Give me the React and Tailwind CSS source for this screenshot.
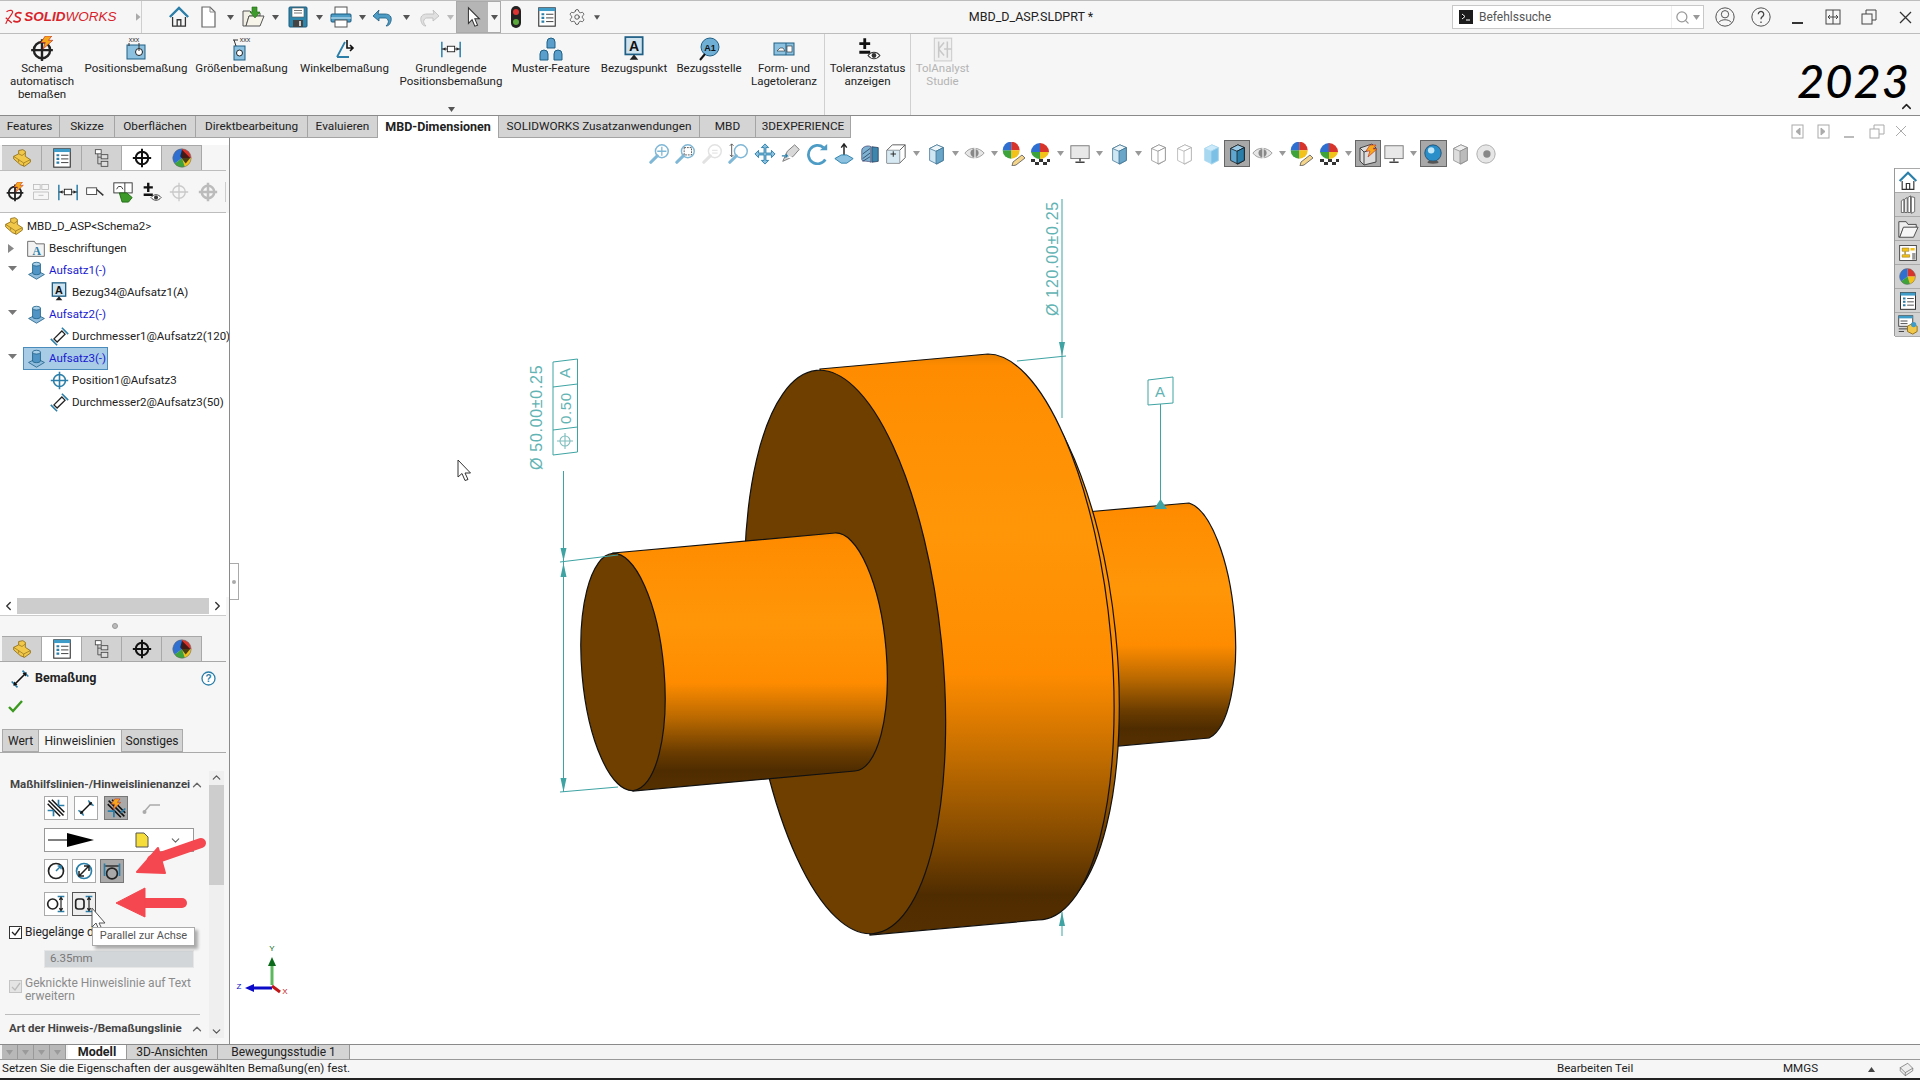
import { Settings, ChevronUp, ChevronDown, ChevronLeft, ChevronRight, Search } from 'lucide-react'

const TEAL = '#2a7ea8'
const ANNO = '#3fa3a3'

function I({ s = 20, children, className = '' }) {
  return <svg width={s} height={s} viewBox="0 0 24 24" fill="none" className={className}>{children}</svg>
}

function Caret({ up = false, color = '#555' }) {
  return (
    <svg width="7" height="5" viewBox="0 0 7 5">
      <path d={up ? 'M0 5L3.5 0L7 5z' : 'M0 0L7 0L3.5 5z'} fill={color} />
    </svg>
  )
}

// ---- general icons
const Home = ({ s = 24 }) => (
  <I s={s}>
    <path d="M2 12L12 2l10 10" stroke={TEAL} strokeWidth="2.6" />
    <path d="M5 12v10h14V12M10 22v-7h4v7" stroke="#333" strokeWidth="1.4" />
  </I>
)
const Doc = () => (
  <I s={24}>
    <path d="M6 2h8l5 5v15H6z" fill="#fff" stroke="#666" strokeWidth="1.2" />
    <path d="M14 2v5h5" stroke="#888" />
  </I>
)
const OpenIco = () => (
  <I s={24}>
    <path d="M2 6h7l2 2h8v3H8L5 21H2z" fill="#f2efe4" stroke="#555" />
    <path d="M8 11h15l-4 10H5z" fill="#f7f4ea" stroke="#555" />
    <path d="M11 2h5v5h3l-5 6-5-6h2z" fill="#3f9a2c" stroke="#1f6a12" strokeWidth=".6" />
  </I>
)
const Save = () => (
  <I s={24}>
    <rect x="3" y="2" width="18" height="20" rx="1" fill="#2f86ad" stroke="#1c5a7c" />
    <rect x="6" y="3" width="12" height="9" fill="#fff" stroke="#555" strokeWidth=".6" />
    <path d="M8 5.5h8M8 8h8" stroke="#777" />
    <rect x="7" y="15" width="10" height="7" fill="#444" />
    <rect x="13" y="16" width="2" height="5" fill="#ccc" />
  </I>
)
const PrintIco = () => (
  <I s={24}>
    <rect x="6" y="2" width="12" height="8" fill="#fff" stroke="#555" />
    <rect x="2" y="9" width="20" height="8" rx="1" fill="#4d9cc6" stroke="#1c5a7c" />
    <rect x="6" y="15" width="12" height="7" fill="#fff" stroke="#555" />
    <path d="M2 13h20" stroke="#d5ecf8" />
  </I>
)
const Undo = ({ off }) => (
  <I s={24}>
    <path
      d="M6 9h7c5 0 7 3 6 7s-3 5-5 5c2-2 3-4 2-6s-2-2-4-2H7v3L1 11l6-6z"
      fill={off ? '#e0e0e0' : '#4d9cc6'}
      stroke={off ? '#bbb' : '#1c5a7c'}
      strokeWidth=".8"
      transform={off ? 'translate(24 0) scale(-1 1)' : undefined}
    />
  </I>
)
const Arrow = ({ s = 22 }) => (
  <I s={s}>
    <path d="M7 2v17l4-4 3 7 3-1-3-7h5z" fill="#fff" stroke="#333" strokeWidth="1.1" />
  </I>
)
const Traffic = () => (
  <svg width="12" height="22" viewBox="0 0 12 22">
    <rect x="1" y="0" width="10" height="22" rx="5" fill="#222" />
    <circle cx="6" cy="6" r="3" fill="#d33" />
    <circle cx="6" cy="16" r="3" fill="#5aa83a" />
  </svg>
)
const ListIco = ({ s = 22 }) => (
  <I s={s}>
    <rect x="3" y="2" width="18" height="20" fill="#fff" stroke="#333" strokeWidth="1.2" />
    <rect x="3" y="2" width="18" height="3.5" fill="#3f9bc7" />
    <path d="M6 9h3M6 13h3M6 17h3" stroke={TEAL} strokeWidth="2.4" />
    <path d="M11 9h8M11 13h8M11 17h8" stroke="#333" />
  </I>
)
const Ball = ({ s = 22, shade = false }) => (
  <I s={s}>
    <path d="M12 12V2a10 10 0 0 1 10 10z" fill="#d9342b" />
    <path d="M12 12h10a10 10 0 0 1-7 9.5z" fill="#f2c21a" />
    <path d="M12 12l3 9.5A10 10 0 0 1 4 18z" fill="#3ea33a" />
    <path d="M12 12L4 18A10 10 0 0 1 12 2z" fill="#2f6fd0" />
    {shade && <path d="M12 3l9 9-5 6-6-8z" fill="#111" opacity=".75" />}
    <circle cx="12" cy="12" r="10" stroke="#666" strokeWidth=".6" />
  </I>
)
const PencilBall = () => (
  <I s={24}>
    <g transform="translate(-1 -2) scale(.85)"><path d="M12 12V2a10 10 0 0 1 10 10z" fill="#d9342b" /><path d="M12 12h10a10 10 0 0 1-10 10z" fill="#f2c21a" /><path d="M12 12v10A10 10 0 0 1 2 12z" fill="#3ea33a" /><path d="M12 12H2A10 10 0 0 1 12 2z" fill="#2f6fd0" /></g>
    <path d="M20 13l3 3-9 7-4 1 1-4z" fill="#f4d58a" stroke="#555" strokeWidth=".8" />
  </I>
)
const CheckerBall = () => (
  <I s={24}>
    <path d="M12 10V1a9 9 0 0 1 9 9z" fill="#d9342b" />
    <path d="M12 10h9a9 9 0 0 1-9 7z" fill="#f2c21a" />
    <path d="M12 10v7a9 9 0 0 1-9-7z" fill="#3ea33a" />
    <path d="M12 10H3a9 9 0 0 1 9-9z" fill="#2f6fd0" />
    <path d="M3 17h4v3H3zM11 17h4v3h-4zM7 20h4v3H7zM15 20h4v3h-4zM19 17h3v3h-3z" fill="#333" />
  </I>
)
const Crosshair = ({ s = 20, c = '#111', w = 2.4 }) => (
  <I s={s}>
    <circle cx="12" cy="12" r="7.5" stroke={c} strokeWidth={w} />
    <path d="M12 1v22M1 12h22" stroke={c} strokeWidth={w} />
  </I>
)
const PartBlock = ({ s = 20 }) => (
  <I s={s}>
    <path d="M2 10l6-3V3l5-1 3 2v6l6 4v3l-7 5-5-2-8-7z" fill="#f2c84b" stroke="#8a6a14" strokeWidth="1" />
    <path d="M8 7l4 2 4-3M2 10l6 4v3M8 14l6 4 8-4M14 18v4" stroke="#8a6a14" strokeWidth=".8" />
  </I>
)
const TreeCfg = ({ s = 20 }) => (
  <I s={s}>
    <rect x="4" y="2" width="7" height="5" fill="#fff" stroke="#444" />
    <rect x="11" y="8" width="8" height="5" fill="#ddd" stroke="#444" />
    <rect x="11" y="16" width="8" height="6" fill="#ddd" stroke="#444" />
    <path d="M7 7v12h4M7 11h4" stroke="#444" />
  </I>
)
const Boss = ({ s = 19 }) => (
  <I s={s}>
    <path d="M2 17l10-5 10 5-10 6z" fill="#8fbcdc" stroke="#1f5f85" />
    <path d="M7 4v11c0 3 10 3 10 0V4z" fill="#4f94c4" stroke="#1f5f85" />
    <ellipse cx="12" cy="4" rx="5" ry="2.4" fill="#a9d0ea" stroke="#1f5f85" />
  </I>
)
const Dia = ({ s = 19 }) => (
  <I s={s}>
    <path d="M5 15L15 5l4 4L9 19z" fill="#fff" stroke="#222" strokeWidth="1.6" />
    <path d="M1 15l8 8M15 1l8 8" stroke={TEAL} strokeWidth="2" />
  </I>
)
const DatumA = ({ s = 20 }) => (
  <svg width={s} height={s} viewBox="0 0 24 24">
    <rect x="4" y="1" width="16" height="16" fill="#cfe3ef" stroke="#1f5f85" strokeWidth="1.6" />
    <text x="12" y="14" textAnchor="middle" fontSize="13" fontWeight="700" fontFamily="Liberation Sans" fill="#111">A</text>
    <path d="M8 22l4-5 4 5z" fill="#222" />
  </svg>
)
const FolderA = () => (
  <svg width="20" height="20" viewBox="0 0 24 24">
    <path d="M2 4h8l2 3h10v15H2z" fill="#f2f2f2" stroke="#555" />
    <text x="13" y="20" textAnchor="middle" fontSize="14" fontWeight="700" fontFamily="Liberation Serif" fill={TEAL}>A</text>
  </svg>
)
const Bolt = ({ x = 12, y = 1 }) => (
  <path transform={`translate(${x} ${y})`} d="M4 0h6L7 4h4L2 12l2-6H0z" fill="#f7a81b" stroke="#c0392b" strokeWidth=".7" />
)
const DimArrows = ({ s = 20 }) => (
  <I s={s}>
    <path d="M2 15l7 7M15 2l7 7" stroke={TEAL} strokeWidth="2" />
    <path d="M6 18L18 6" stroke="#111" strokeWidth="2" />
    <path d="M4 20l1-5 4 4zM20 4l-1 5-4-4z" fill="#111" />
  </I>
)

// ---- ribbon icons
const SchemaIco = () => (
  <I s={26}>
    <circle cx="12" cy="13" r="7.5" stroke="#222" strokeWidth="2.2" />
    <path d="M12 3v20M2 13h20" stroke="#222" strokeWidth="2.2" />
    <Bolt x={11} y={0} />
  </I>
)
const PosDim = () => (
  <svg width="20" height="26" viewBox="0 0 20 26">
    <text x="8" y="6" textAnchor="middle" fontSize="7" fontFamily="Liberation Sans" fill="#333">xxx</text>
    <rect x="1" y="9" width="18" height="14" fill="#8cc2e0" stroke="#1f5f85" />
    <circle cx="13" cy="16" r="3.5" fill="#fff" stroke="#222" />
    <path d="M3 7v3M13 7v8" stroke="#333" />
  </svg>
)
const SizeDim = () => (
  <svg width="22" height="26" viewBox="0 0 22 26">
    <text x="14" y="6" textAnchor="middle" fontSize="7" fontFamily="Liberation Sans" fill="#333">xxx</text>
    <rect x="3" y="10" width="11" height="14" fill="#8cc2e0" stroke="#1f5f85" />
    <circle cx="8.5" cy="17" r="3" fill="#fff" stroke="#222" />
    <path d="M2 4h5M3 4l2 6" stroke="#333" />
  </svg>
)
const AngleDim = () => (
  <I s={24}>
    <path d="M4 20L12 5M4 20h12" stroke={TEAL} strokeWidth="1.8" />
    <path d="M14 3v8h5M17 8l3 3-3 3" stroke="#111" strokeWidth="1.6" />
  </I>
)
const BasicPos = () => (
  <svg width="22" height="22" viewBox="0 0 24 24">
    <path d="M2 4v17M22 4v17" stroke={TEAL} strokeWidth="1.6" />
    <rect x="8" y="9" width="8" height="6" fill="#fff" stroke="#222" />
    <path d="M2 12h6M16 12h6" stroke="#222" />
    <path d="M3 12l3-2v4zM21 12l-3-2v4z" fill="#222" />
  </svg>
)
const Muster = () => (
  <svg width="24" height="26" viewBox="0 0 24 26">
    {[[12, 1], [5, 13], [19, 13]].map(([x, y]) => (
      <g key={x}>
        <path d={`M${x - 4} ${y + 11}v-6a4 4 0 0 1 8 0v6z`} fill="#5a9fcb" stroke="#1f5f85" />
      </g>
    ))}
  </svg>
)
const BezugP = () => <DatumA s={26} />
const BezugS = () => (
  <svg width="24" height="24" viewBox="0 0 24 24">
    <circle cx="13" cy="10" r="9" fill="#6fafd6" stroke="#1f5f85" />
    <text x="13" y="14" textAnchor="middle" fontSize="9" fontWeight="700" fontFamily="Liberation Sans" fill="#111">A1</text>
    <path d="M8 17l-5 6" stroke="#111" strokeWidth="2" />
  </svg>
)
const FormTol = () => (
  <svg width="22" height="14" viewBox="0 0 22 14">
    <rect x="1" y="1" width="20" height="12" fill="#8cc2e0" stroke="#1f5f85" />
    <path d="M4 9l3-3h3l2 3z" fill="#fff" stroke="#222" strokeWidth=".6" />
    <path d="M13 1v12" stroke="#1f5f85" />
    <rect x="14" y="4" width="5" height="6" fill="#fff" stroke="#222" strokeWidth=".6" />
  </svg>
)
const TolStatus = ({ s = 26 }) => (
  <I s={s}>
    <path d="M9 2v10M4 7h10M4 15h10" stroke="#111" strokeWidth="2.6" />
    <path d="M12 18c3-4 8-4 11 0-3 4-8 4-11 0z" fill="#fff" stroke="#333" />
    <circle cx="17.5" cy="18" r="2.2" fill="#333" />
  </I>
)
const TolAnalyst = () => (
  <I s={26}>
    <rect x="4" y="2" width="16" height="21" fill="#f0f0f0" stroke="#ccc" />
    <path d="M8 5v15M8 12l5-6M8 12l5 6M16 5v15M13 12h7" stroke="#c8c8c8" strokeWidth="1.4" />
  </I>
)

// ---- heads-up toolbar icons
const Mag = ({ children, c = '#7fb7d6' }) => (
  <I s={22}>
    <circle cx="14" cy="9" r="7" fill="#fff" stroke={c} strokeWidth="1.6" />
    <path d="M9 14l-7 7" stroke={c} strokeWidth="3.4" strokeLinecap="round" />
    {children}
  </I>
)
const Pan = () => (
  <I s={22}>
    <path d="M12 1l4 4h-3v6h6V8l4 4-4 4v-3h-6v6h3l-4 4-4-4h3v-6H5v3l-4-4 4-4v3h6V5H8z" fill="#8cc2e0" stroke="#2a7ea8" />
  </I>
)
const Camera3d = () => (
  <I s={22}>
    <path d="M3 20l5-11 8-7 5 5-7 8z" fill="#d8d8d8" stroke="#777" />
    <path d="M5 13l9 4" stroke="#fff" strokeWidth="2" />
    <path d="M2 14h6l-2-2M8 14l-2 2" stroke={TEAL} strokeWidth="1.4" />
  </I>
)
const Rotate = () => (
  <I s={22}>
    <path d="M20 18a10 10 0 1 1-2-13" stroke="#4d9cc6" strokeWidth="3" />
    <path d="M14 8h8V1z" fill="#4d9cc6" />
  </I>
)
const UpPlane = () => (
  <I s={22}>
    <path d="M12 2v15M9 5l3-4 3 4" stroke="#222" strokeWidth="1.6" />
    <path d="M2 17l7-4h6l7 4-7 5H9z" fill="#8cc2e0" stroke={TEAL} />
  </I>
)
const Section = () => (
  <I s={22}>
    <path d="M3 8c0-4 7-6 10-4v17c-3-2-10 0-10-3z" fill="#7fb2d0" stroke="#336" strokeWidth=".7" />
    <path d="M14 4l7 1v15l-7 1z" fill="#3f86ad" stroke="#124" strokeWidth=".7" />
    <path d="M4 12l8-6M4 17l8-6M4 20l8-5" stroke="#124" strokeWidth=".7" />
  </I>
)
const BoxView = () => (
  <I s={22}>
    <path d="M2 8l6-6h14v14l-6 6H2z" fill="#fff" stroke="#555" />
    <path d="M2 8h14v14M16 8l6-6" stroke="#555" />
    <path d="M16 8v14H2V8z" fill="#cde3f0" opacity=".8" />
    <path d="M6 12h6M9 9v6" stroke="#222" />
  </I>
)
const Cube = ({ fill = '#7fb7d6', s = 22, hi = '#cfe6f3', dk = '#3f86ad', line = '#3a6f8e' }) => (
  <I s={s}>
    <path d="M5 6l8-4 7 3v14l-7 4-8-4z" fill={fill} stroke={line} strokeWidth=".8" />
    <path d="M5 6l7 3 8-4-7-3z" fill={hi} stroke={line} strokeWidth=".8" />
    <path d="M12 9v14l8-4V5z" fill={dk} stroke={line} strokeWidth=".8" />
  </I>
)
const Eye = () => (
  <I s={22}>
    <path d="M1 11c5-7 15-7 21 0-6 7-16 7-21 0z" fill="#e6e6e6" stroke="#999" />
    <circle cx="11.5" cy="11" r="4.5" fill="#888" />
    <path d="M12 3v18" stroke="#fff" strokeWidth="1.2" />
  </I>
)
const Monitor = () => (
  <I s={22}>
    <rect x="2" y="3" width="20" height="14" fill="#e8e8e8" stroke="#777" />
    <path d="M12 17v3M7 21h10" stroke="#444" strokeWidth="1.6" />
  </I>
)
const Sphere = () => (
  <I s={22}>
    <circle cx="12" cy="11" r="9" fill="#2a8fc8" stroke="#135" strokeWidth=".7" />
    <circle cx="10" cy="8" r="3.5" fill="#bfe6f8" />
    <ellipse cx="12" cy="21" rx="6" ry="1.6" fill="#555" />
  </I>
)
const Lens = () => (
  <I s={22}>
    <circle cx="12" cy="12" r="10" fill="#e6e6e6" stroke="#aaa" />
    <circle cx="13" cy="12" r="4" fill="#888" />
  </I>
)
const BoltCube = () => (
  <I s={24}>
    <path d="M4 6l12-4 4 4v14L8 23l-4-4z" fill="#dcdcdc" stroke="#444" />
    <path d="M4 6l4 4v13M8 10l12-4" stroke="#444" />
    <Bolt x={10} y={3} />
  </I>
)
const ZoomArrows = () => <Mag><path d="M14 4v10M9 9h10" stroke="#7fb7d6" strokeWidth="1.4" /></Mag>

const HUD = [
  { el: <ZoomArrows /> },
  { el: <Mag><rect x="10" y="5" width="8" height="8" stroke="#555" strokeDasharray="2 1" /></Mag> },
  { el: <Mag c="#e2e2e2"><path d="M11 8h6M11 11h6" stroke="#ddd" /></Mag> },
  { el: <Mag><path d="M4 1v14M2 3l2-2 2 2M2 13l2 2 2-2" stroke="#555" /></Mag> },
  { el: <Pan /> },
  { el: <Camera3d /> },
  { el: <Rotate /> },
  { el: <UpPlane /> },
  { el: <Section /> },
  { el: <BoxView />, caret: true },
  { el: <Cube fill="#cfe6f3" hi="#eef6fa" dk="#6aa6c8" />, caret: true },
  { el: <Eye />, caret: true },
  { el: <PencilBall /> },
  { el: <CheckerBall />, caret: true },
  { el: <Monitor />, caret: true },
  { el: <Cube fill="#cfe6f3" hi="#eef6fa" dk="#6aa6c8" />, caret: true },
  { el: <Cube fill="#fff" hi="#fff" dk="#fff" line="#888" /> },
  { el: <Cube fill="#fff" hi="#fff" dk="#fff" line="#aaa" /> },
  { el: <Cube fill="#a8d8f0" hi="#cdeafa" dk="#7cc0e6" line="#a8d8f0" /> },
  { el: <Cube fill="#5fa6d0" hi="#9accea" dk="#2a7ea8" line="#111" />, on: true },
  { el: <Eye />, caret: true },
  { el: <PencilBall /> },
  { el: <CheckerBall />, caret: true },
  { el: <BoltCube />, on: true },
  { el: <Monitor />, caret: true },
  { el: <Sphere />, on: true },
  { el: <Cube fill="#ddd" hi="#eee" dk="#bbb" line="#888" /> },
  { el: <Lens /> },
]

const TABS = [
  { label: 'Features', w: 'w-[60px]' },
  { label: 'Skizze', w: 'w-[55px]' },
  { label: 'Oberflächen', w: 'w-[81px]' },
  { label: 'Direktbearbeitung', w: 'w-[112px]' },
  { label: 'Evaluieren', w: 'w-[70px]' },
  { label: 'MBD-Dimensionen', w: 'w-[121px]', active: true },
  { label: 'SOLIDWORKS Zusatzanwendungen', w: 'w-[201px]' },
  { label: 'MBD', w: 'w-[56px]' },
  { label: '3DEXPERIENCE', w: 'w-[95px]' },
]

const RIBBON = [
  { w: 'w-[84px]', icon: <SchemaIco />, lines: ['Schema', 'automatisch', 'bemaßen'] },
  { w: 'w-[104px]', icon: <PosDim />, lines: ['Positionsbemaßung'] },
  { w: 'w-[107px]', icon: <SizeDim />, lines: ['Größenbemaßung'] },
  { w: 'w-[99px]', icon: <AngleDim />, lines: ['Winkelbemaßung'] },
  { w: 'w-[114px]', icon: <BasicPos />, lines: ['Grundlegende', 'Positionsbemaßung'], caret: true },
  { w: 'w-[86px]', icon: <Muster />, lines: ['Muster-Feature'] },
  { w: 'w-[80px]', icon: <BezugP />, lines: ['Bezugspunkt'] },
  { w: 'w-[70px]', icon: <BezugS />, lines: ['Bezugsstelle'] },
  { w: 'w-[80px]', icon: <FormTol />, lines: ['Form- und', 'Lagetoleranz'] },
]

const TREE = [
  { depth: 0, icon: <PartBlock />, text: 'MBD_D_ASP<Schema2>' },
  { depth: 1, arrow: 'right', icon: <FolderA />, text: 'Beschriftungen' },
  { depth: 1, arrow: 'down', icon: <Boss />, text: 'Aufsatz1(-)', blue: true },
  { depth: 2, icon: <DatumA />, text: 'Bezug34@Aufsatz1(A)' },
  { depth: 1, arrow: 'down', icon: <Boss />, text: 'Aufsatz2(-)', blue: true },
  { depth: 2, icon: <Dia />, text: 'Durchmesser1@Aufsatz2(120)' },
  { depth: 1, arrow: 'down', icon: <Boss />, text: 'Aufsatz3(-)', blue: true, sel: true },
  { depth: 2, icon: <Crosshair s={19} c={TEAL} w={2} />, text: 'Position1@Aufsatz3' },
  { depth: 2, icon: <Dia />, text: 'Durchmesser2@Aufsatz3(50)' },
]

function ModeTabs({ active }) {
  const icons = [<PartBlock key="p" />, <ListIco key="l" />, <TreeCfg key="t" />, <Crosshair key="c" />, <Ball key="b" shade />]
  return (
    <div className="flex h-full pl-[2px]">
      {icons.map((ic, i) => (
        <div
          key={i}
          className={`w-10 flex items-center justify-center border-r border-t border-[#a8a8a8] ${i === active ? 'bg-white' : 'bg-[#d2d2d2]'}`}
        >
          {ic}
        </div>
      ))}
    </div>
  )
}

function Btn({ children, on = false }) {
  return (
    <div className={`w-6 h-6 flex items-center justify-center border ${on ? 'bg-[#a9a9a9] border-[#777]' : 'bg-white border-[#aaa]'}`}>
      {children}
    </div>
  )
}

function TreeRow({ row }) {
  const pad = row.depth === 0 ? 'pl-[2px]' : row.depth === 1 ? 'pl-[24px]' : 'pl-[47px]'
  return (
    <div className={`relative h-[22px] flex items-center ${pad} whitespace-nowrap`}>
      {row.arrow && (
        <div className="absolute left-[8px] top-[7px]">
          {row.arrow === 'right'
            ? <svg width="6" height="9" viewBox="0 0 6 9"><path d="M0 0l6 4.5L0 9z" fill="#888" /></svg>
            : <svg width="9" height="6" viewBox="0 0 9 6"><path d="M0 0h9L4.5 5z" fill="#777" /></svg>}
        </div>
      )}
      <div className={`h-[21px] flex items-center gap-[3px] pl-[2px] pr-[1px] ${row.sel ? 'bg-[#a8cbe6] outline outline-[#4a8dbd]' : ''}`}>
        <span className="w-5 flex justify-center shrink-0">{row.icon}</span>
        <span className={`text-[11.5px] leading-[20px] ${row.blue ? 'text-[#1a1ad0]' : 'text-[#222]'}`}>
          {row.text}
        </span>
      </div>
    </div>
  )
}

function PartDrawing() {
  return (
    <svg className="absolute inset-0" width="1691" height="906" viewBox="229 138 1691 906" fill="none">
      <defs>
        <linearGradient id="rimG" x1="0" y1="0" x2="0" y2="1">
          <stop offset="0" stopColor="#e88000" />
          <stop offset=".02" stopColor="#ff8c00" />
          <stop offset=".3" stopColor="#ff9608" />
          <stop offset=".55" stopColor="#ff8c00" />
          <stop offset=".68" stopColor="#c87000" />
          <stop offset=".82" stopColor="#8a4e00" />
          <stop offset=".93" stopColor="#4f2c00" />
          <stop offset="1" stopColor="#552f00" />
        </linearGradient>
        <linearGradient id="cylG" x1="0" y1="0" x2="0" y2="1">
          <stop offset="0" stopColor="#ee8400" />
          <stop offset=".03" stopColor="#ff8c00" />
          <stop offset=".35" stopColor="#ff9608" />
          <stop offset=".58" stopColor="#ff8c00" />
          <stop offset=".72" stopColor="#b86800" />
          <stop offset=".85" stopColor="#6a3c00" />
          <stop offset=".92" stopColor="#4f2c00" />
          <stop offset="1" stopColor="#553000" />
        </linearGradient>
      </defs>

      {/* right shaft */}
      <path d="M1085 512L1188 503A41 119 -5 0 1 1208 738L1095 748Z" fill="url(#cylG)" stroke="#111" strokeWidth="1.2" />
      {/* flange, thin back rim + main rim + front face */}
      <ellipse cx="1017" cy="642" rx="98" ry="272" transform="rotate(-5.8 1017 642)" fill="url(#rimG)" stroke="#111" strokeWidth="1.2" />
      <path d="M819 369L987 354A97 283 -5.8 0 1 1037 920L869 935Z" fill="url(#rimG)" stroke="#111" strokeWidth="1.2" />
      <ellipse cx="844" cy="652" rx="97" ry="283" transform="rotate(-5.8 844 652)" fill="#6f3f00" stroke="#111" strokeWidth="1.2" />
      {/* left shaft */}
      <path d="M612 553L834 533A41 119 -5 0 1 854 771L632 791Z" fill="url(#cylG)" stroke="#111" strokeWidth="1.2" />
      <ellipse cx="622" cy="672" rx="41" ry="119" transform="rotate(-5 622 672)" fill="#6f3f00" stroke="#111" strokeWidth="1.2" />

      {/* dimension 120 */}
      <g stroke={ANNO} strokeWidth="1">
        <path d="M1061 199V418M1016 361L1065 356" />
        <path d="M1061 912V936" />
      </g>
      <path d="M1058 342h6l-3 14z" fill={ANNO} />
      <path d="M1058 926h6l-3-14z" fill={ANNO} />
      <text transform="rotate(-90 1057 316)" x="1057" y="316" fontSize="16" letterSpacing=".7" fontFamily="Liberation Sans" fill="#62b3b3">Ø 120.00±0.25</text>

      {/* dimension 50 + tolerance frame */}
      <g stroke={ANNO} strokeWidth="1">
        <path d="M562.5 471V792M559 562L617 555M559 792L617 787" />
        <path d="M552 362L576.5 359V452L552 455ZM552 387L576.5 384M552 430L576.5 427" />
      </g>
      <path d="M559.5 548h6l-3 13z" fill={ANNO} />
      <path d="M559.5 577h6l-3-14z" fill={ANNO} />
      <path d="M559.5 778h6l-3 14z" fill={ANNO} />
      <text transform="rotate(-90 541 470)" x="541" y="470" fontSize="16" letterSpacing=".7" fontFamily="Liberation Sans" fill="#62b3b3">Ø 50.00±0.25</text>
      <text transform="rotate(-90 569 378)" x="569" y="378" fontSize="15" fontFamily="Liberation Sans" fill="#62b3b3">A</text>
      <text transform="rotate(-90 570 424)" x="570" y="424" fontSize="15" letterSpacing=".6" fontFamily="Liberation Sans" fill="#62b3b3">0.50</text>
      <g stroke="#7fbcbc" strokeWidth="1.1"><circle cx="564" cy="441" r="5" /><path d="M564 433V449M556 441H572" /></g>

      {/* datum A */}
      <path d="M1147 380L1172 377V403L1147 405Z" stroke={ANNO} fill="#fff" />
      <text x="1159" y="397" textAnchor="middle" fontSize="15" fontFamily="Liberation Sans" fill="#62b3b3">A</text>
      <path d="M1159.5 404V502" stroke={ANNO} />
      <path d="M1153 509h13l-6.500-10z" fill={ANNO} />

      {/* triad */}
      <path d="M271 985V965" stroke="#5cb85c" strokeWidth="3" />
      <path d="M271 957l-4 9h8z" fill="#0a6a1a" />
      <path d="M271 988H252" stroke="#0a0ac8" strokeWidth="3" />
      <path d="M244 988l9-4v8z" fill="#0a0ac8" />
      <path d="M271 986l8 6" stroke="#c01818" strokeWidth="3" />
      <text x="271" y="951" textAnchor="middle" fontSize="8" fontFamily="Liberation Sans" fill="#0a6a1a">Y</text>
      <text x="238" y="989" textAnchor="middle" fontSize="8" fontFamily="Liberation Sans" fill="#0a0ac8">Z</text>
      <text x="284" y="994" textAnchor="middle" fontSize="8" fontFamily="Liberation Sans" fill="#c01818">X</text>

      {/* mouse pointer */}
      <path d="M457 460v17l4-3.500 3 7 3-1-3-6.500h5.500z" fill="#fff" stroke="#333" />
    </svg>
  )
}

function Overlays() {
  return (
    <>
      <svg className="absolute left-0 top-0 pointer-events-none" width="240" height="1080" viewBox="0 0 240 1080" fill="none">
        <path d="M201 843L152 860" stroke="#f4474f" strokeWidth="10" strokeLinecap="round" />
        <path d="M137 872L158 848L165 873Z" fill="#f4474f" stroke="#f4474f" strokeWidth="2" strokeLinejoin="round" />
        <path d="M182 903H140" stroke="#f4474f" strokeWidth="10" strokeLinecap="round" />
        <path d="M116 903L145 888V917Z" fill="#f4474f" stroke="#f4474f" strokeWidth="1" strokeLinejoin="round" />
        <path d="M92 908v19l4-4 3 7 3-1-3-6h6z" fill="#fff" stroke="#555" />
      </svg>
      <div className="absolute left-[92px] top-[927px] w-[103px] h-[19px] bg-white border border-[#aaa] shadow-[3px_3px_3px_rgba(0,0,0,0.3)] flex items-center justify-center text-[11px] text-[#555]">
        Parallel zur Achse
      </div>
    </>
  )
}

export default function App() {
  return (
    <div className="relative w-[1920px] h-[1080px] overflow-hidden flex flex-col bg-white text-[#222] [font-family:Roboto,sans-serif]">
      {/* title bar */}
      <div className="h-[34px] shrink-0 flex items-center bg-[#f6f6f6] border-t border-b border-[#bdbdbd]">
        <div className="w-[610px] shrink-0 flex items-center h-full">
          <div className="w-[142px] h-full flex items-center border-r border-[#cfcfcf] pl-[5px] gap-[3px]">
            <svg width="24" height="22" viewBox="0 0 24 22" fill="none">
              <path d="M2 4c4-3 9-2 8 1-1 4-7 8-9 15M1 12l8 7" stroke="#d8232a" strokeWidth="1.6" />
              <path d="M22 6c-5-2-9 0-8 3 1 3 7 2 6 6-1 3-6 3-9 1" stroke="#d8232a" strokeWidth="2.2" />
            </svg>
            <span className="text-[13.5px] italic text-[#d8232a] [font-family:'Liberation_Sans',sans-serif] -ml-[2px]">
              <b>SOLID</b>WORKS
            </span>
            <svg className="ml-[17px]" width="6" height="10" viewBox="0 0 6 10"><path d="M0 0l6 5-6 5z" fill="#aaa" /></svg>
          </div>
          <div className="flex items-center ml-[25px]">
            <span className="w-[24px] flex justify-center"><Home s={22} /></span>
            <span className="w-[34px] flex justify-center"><Doc /></span>
            <span className="w-[10px] flex justify-center"><Caret /></span>
            <span className="w-[30px] flex justify-center ml-[3px]"><OpenIco /></span>
            <span className="w-[14px] flex justify-center"><Caret /></span>
            <span className="w-[28px] flex justify-center ml-[2px]"><Save /></span>
            <span className="w-[14px] flex justify-center"><Caret /></span>
            <span className="w-[30px] flex justify-center"><PrintIco /></span>
            <span className="w-[12px] flex justify-center"><Caret /></span>
            <span className="w-[32px] flex justify-center"><Undo /></span>
            <span className="w-[12px] flex justify-center"><Caret /></span>
            <span className="w-[32px] flex justify-center"><Undo off /></span>
            <span className="w-[12px] flex justify-center"><Caret color="#bbb" /></span>
            <div className="flex h-[32px] border border-[#aaa]">
              <span className="w-[31px] bg-[#b5b5b5] flex items-center justify-center"><Arrow /></span>
              <span className="w-[12px] flex items-center justify-center"><Caret /></span>
            </div>
            <span className="w-[28px] flex justify-center ml-[1px]"><Traffic /></span>
            <span className="w-[26px] flex justify-center ml-[4px]"><ListIco /></span>
            <span className="w-[34px] flex justify-center"><Settings size={18} strokeWidth={1} color="#333" /></span>
            <span className="w-[6px] flex justify-center"><Caret /></span>
          </div>
        </div>
        <div className="flex-1 text-center text-[12.5px]">MBD_D_ASP.SLDPRT *</div>
        <div className="w-[252px] shrink-0 h-[24px] bg-white border border-[#c8c8c8] flex items-center">
          <svg className="ml-[6px]" width="14" height="14" viewBox="0 0 14 14"><rect width="14" height="14" fill="#1c1c1c" /><path d="M3 4l3 2.500-3 2.500M7 10h4" stroke="#fff" /></svg>
          <span className="ml-[6px] flex-1 text-[12px] text-[#555]">Befehlssuche</span>
          <span className="w-[32px] h-full border-l border-[#eee] flex items-center gap-[3px] pl-[3px]">
            <Search size={15} color="#999" />
            <Caret color="#999" />
          </span>
        </div>
        <div className="flex shrink-0 ml-[3px] -mr-[3px] items-center">
          <span className="w-9 flex justify-center">
            <I s={22}><circle cx="12" cy="12" r="10" stroke="#444" /><circle cx="12" cy="9" r="4" stroke="#444" /><path d="M5 18c3-4 11-4 14 0" stroke="#444" /></I>
          </span>
          <span className="w-9 flex justify-center">
            <svg width="22" height="22" viewBox="0 0 24 24" fill="none"><circle cx="12" cy="12" r="10" stroke="#444" /><path d="M9 9a3 3 0 1 1 4.500 2.600c-1 .6-1.500 1.300-1.500 2.900M12 17v1.500" stroke="#444" strokeWidth="1.400" /></svg>
          </span>
          <span className="w-9 flex justify-center pt-[12px]"><span className="w-[11px] h-[2px] bg-[#333]" /></span>
          <span className="w-9 flex justify-center">
            <svg width="16" height="16" viewBox="0 0 16 16" fill="none"><rect x="1" y="1" width="14" height="14" stroke="#444" /><path d="M8 1v14M3 8h10M3 8l2-2M3 8l2 2M13 8l-2-2M13 8l-2 2" stroke="#444" /></svg>
          </span>
          <span className="w-9 flex justify-center">
            <svg width="16" height="16" viewBox="0 0 16 16" fill="none"><rect x="1" y="5" width="10" height="10" stroke="#444" /><path d="M5 5V1h10v10h-4" stroke="#444" /></svg>
          </span>
          <span className="w-9 flex justify-center">
            <svg width="13" height="13" viewBox="0 0 13 13"><path d="M1 1l11 11M12 1L1 12" stroke="#333" strokeWidth="1.300" /></svg>
          </span>
        </div>
      </div>

      {/* ribbon */}
      <div className="relative h-[82px] shrink-0 flex bg-[#f6f6f6] border-b border-[#8a8a8a]">
        {RIBBON.map(r => (
          <div key={r.lines[0]} className={`${r.w} shrink-0 flex flex-col items-center text-[11.5px] leading-[13px] text-center`}>
            <div className="h-[26px] mt-[2px] flex items-center justify-center">{r.icon}</div>
            {r.lines.map(l => <div key={l} className="whitespace-nowrap">{l}</div>)}
            {r.caret && <div className="mt-[19px] flex"><Caret /></div>}
          </div>
        ))}
        <div className="w-[86px] shrink-0 border-l border-[#d0d0d0] flex flex-col items-center text-[11.5px] leading-[13px] text-center">
          <div className="h-[26px] mt-[2px] flex items-center justify-center"><TolStatus /></div>
          <div>Toleranzstatus</div>
          <div>anzeigen</div>
        </div>
        <div className="w-[64px] shrink-0 border-l border-[#d0d0d0] flex flex-col items-center text-[11.5px] leading-[13px] text-center text-[#b4b4b4]">
          <div className="h-[26px] mt-[2px] flex items-center justify-center"><TolAnalyst /></div>
          <div>TolAnalyst</div>
          <div>Studie</div>
        </div>
        <div className="absolute right-[10px] top-[21px] text-[47px] leading-[50px] italic font-medium text-black tracking-[1px] [font-family:Lato,sans-serif]">2023</div>
        <ChevronUp className="absolute right-[6px] bottom-[1px]" size={15} strokeWidth={2.4} color="#222" />
      </div>

      {/* command manager tabs */}
      <div className="h-[22px] shrink-0 flex bg-white">
        {TABS.map(t => (
          <div
            key={t.label}
            className={`${t.w} h-full flex items-center justify-center whitespace-nowrap border-r border-[#a4a4a4] ${t.active ? 'bg-white font-bold text-[12.5px]' : 'bg-[#d4d4d4] border-b text-[11.8px]'}`}
          >
            {t.label}
          </div>
        ))}
      </div>

      {/* main */}
      <div className="flex-1 min-h-0 flex">
        <div className="w-[230px] shrink-0 flex flex-col border-r border-[#8a8a8a] bg-[#f6f6f6]">
          <div className="h-[7px] shrink-0 bg-white" />
          <div className="h-[25px] shrink-0"><ModeTabs active={3} /></div>
          <div className="h-[43px] shrink-0 flex items-center gap-[5px] pl-[5px] border-t border-b border-[#bdbdbd] mr-[3px] overflow-hidden">
            <SchemaIco2 />
            <span className="w-[22px] shrink-0 flex justify-center opacity-40"><Sq /></span>
            <span className="w-[22px] shrink-0 flex justify-center"><BasicPos /></span>
            <span className="w-[22px] shrink-0 flex justify-center"><LeaderBox /></span>
            <span className="w-[24px] shrink-0 flex justify-center"><FormGreen /></span>
            <span className="w-[22px] shrink-0 flex justify-center"><TolStatus s={22} /></span>
            <span className="w-[24px] shrink-0 flex justify-center opacity-30"><Crosshair c="#666" w={1.6} /></span>
            <span className="w-[24px] shrink-0 flex justify-center opacity-40"><Crosshair c="#666" w={3} /></span>
            <span className="w-[6px] shrink-0 h-[20px] bg-[#e4e4e4] border border-[#ccc]" />
          </div>
          <div className="h-[384px] shrink-0 bg-white overflow-hidden pt-[2px]">
            {TREE.map(row => <TreeRow key={row.text} row={row} />)}
          </div>
          <div className="h-[19px] shrink-0 flex items-center bg-white border-b border-[#ccc] mr-[3px]">
            <ChevronLeft size={14} strokeWidth={2.4} color="#333" className="w-[17px]" />
            <div className="flex-1 h-[16px] bg-[#cdcdcd]" />
            <ChevronRight size={14} strokeWidth={2.4} color="#333" className="w-[17px]" />
          </div>
          <div className="h-[20px] shrink-0 flex items-center justify-center">
            <span className="w-[6px] h-[6px] rounded-full bg-[#bbb] border border-[#999]" />
          </div>
          <div className="h-[26px] shrink-0 border-b border-[#a8a8a8] mr-[3px]"><ModeTabs active={1} /></div>

          <div className="h-[33px] shrink-0 flex items-center pl-[10px] pr-[13px]">
            <DimArrows />
            <span className="ml-[5px] flex-1 font-bold text-[12.5px] text-[#222]">Bemaßung</span>
            <svg width="15" height="15" viewBox="0 0 15 15" fill="none">
              <circle cx="7.5" cy="7.500" r="6.500" fill="#fff" stroke={TEAL} strokeWidth="1.300" />
              <text x="7.5" y="11" textAnchor="middle" fontSize="10" fontWeight="700" fontFamily="Liberation Sans" fill={TEAL}>?</text>
            </svg>
          </div>
          <div className="h-[22px] shrink-0 pl-[8px] flex items-center">
            <svg width="15" height="13" viewBox="0 0 15 13" fill="none"><path d="M1 7l4 4 9-10" stroke="#3b9a1e" strokeWidth="2.400" /></svg>
          </div>
          <div className="h-[24px] mt-[12px] shrink-0 flex pl-[2px] border-b border-[#aaa] mr-[3px] text-[12px]">
            <div className="w-[37px] flex items-center justify-center bg-[#d4d4d4] border border-[#aaa]">Wert</div>
            <div className="w-[82px] flex items-center justify-center bg-[#f6f6f6] border-t border-[#aaa]">Hinweislinien</div>
            <div className="w-[62px] flex items-center justify-center bg-[#d4d4d4] border border-[#aaa]">Sonstiges</div>
          </div>

          <div className="flex-1 min-h-0 flex">
            <div className="flex-1 min-w-0 flex flex-col">
              <div className="h-[24px] mt-[20px] shrink-0 flex items-center pl-[10px] pr-[1px]">
                <span className="flex-1 overflow-hidden whitespace-nowrap font-bold text-[11.5px] text-[#444]">Maßhilfslinien-/Hinweislinienanzei</span>
                <ChevronUp size={14} color="#666" strokeWidth={2.2} />
              </div>
              <div className="flex gap-[6px] pl-[44px] items-center -mt-[1px]">
                <Btn><Collapse /></Btn>
                <Btn><DimArrows s={18} /></Btn>
                <Btn on><CollapseBolt /></Btn>
                <svg className="ml-[8px]" width="20" height="14" viewBox="0 0 20 14" fill="none"><path d="M2 11l6-7h10" stroke="#aaa" strokeWidth="1.500" /><circle cx="2.500" cy="11" r="2" fill="#aaa" /></svg>
              </div>
              <div className="ml-[44px] mr-[11px] mt-[8px] h-[24px] shrink-0 bg-white border border-[#999] flex items-center">
                <svg className="ml-[2px]" width="48" height="14" viewBox="0 0 48 14"><path d="M1 7h22" stroke="#000" /><path d="M20 0l27 7-27 7z" fill="#000" /></svg>
                <svg className="ml-[40px]" width="14" height="16" viewBox="0 0 14 16"><path d="M1 1h8l4 4v10H1z" fill="#f7dd3a" stroke="#555" /></svg>
                <ChevronDown className="ml-[20px]" size={13} color="#666" />
              </div>
              <div className="flex pl-[44px] mt-[7px] gap-[4px]">
                <Btn><Circ kind="r" /></Btn>
                <Btn><Circ kind="d" /></Btn>
                <Btn on><Circ kind="s" /></Btn>
              </div>
              <div className="flex pl-[44px] mt-[9px] gap-[4px]">
                <Btn><Par /></Btn>
                <div className="w-6 h-6 flex items-center justify-center border border-[#555] bg-[#eee]"><Par2 /></div>
              </div>
              <div className="flex items-center mt-[9px] pl-[9px] text-[12px] whitespace-nowrap h-[14px]">
                <span className="w-[13px] h-[13px] shrink-0 border border-[#333] bg-white flex items-center justify-center">
                  <svg width="10" height="10" viewBox="0 0 10 10" fill="none"><path d="M1 5l3 3 5-7" stroke="#222" strokeWidth="1.300" /></svg>
                </span>
                <span className="ml-[3px]">Biegelänge d</span>
              </div>
              <div className="ml-[44px] mr-[11px] mt-[11px] h-[18px] shrink-0 bg-[#d3d6d9] border border-[#e6e6e6] text-[11.5px] text-[#777] flex items-center pl-[5px]">6.35mm</div>
              <div className="flex pl-[9px] mt-[9px] text-[12px] leading-[13px] text-[#8b8b8b]">
                <span className="w-[13px] h-[13px] mt-[3px] shrink-0 border border-[#c4c4c4] bg-[#e4e4e4] flex items-center justify-center">
                  <svg width="10" height="10" viewBox="0 0 10 10" fill="none"><path d="M1 5l3 3 5-7" stroke="#bbb" strokeWidth="1.300" /></svg>
                </span>
                <span className="ml-[3px]">Geknickte Hinweislinie auf Text erweitern</span>
              </div>
              <div className="mx-[5px] mt-[11px] h-px shrink-0 bg-[#bdbdbd]" />
              <div className="h-[28px] shrink-0 flex items-center pl-[9px] pr-[1px]">
                <span className="flex-1 whitespace-nowrap overflow-hidden font-bold text-[11.5px] text-[#444]">Art der Hinweis-/Bemaßungslinie</span>
                <ChevronUp size={14} color="#666" strokeWidth={2.2} />
              </div>
            </div>
            <div className="w-[15px] shrink-0 ml-[4px] mr-[5px] mt-[18px] mb-[6px] flex flex-col items-center bg-[#efefef]">
              <ChevronUp size={13} color="#555" strokeWidth={2.2} />
              <div className="w-full h-[100px] bg-[#cdcdcd] mt-[1px]" />
              <div className="flex-1" />
              <ChevronDown size={13} color="#555" strokeWidth={2.2} />
            </div>
          </div>
        </div>

        {/* graphics area */}
        <div className="relative flex-1 min-w-0 bg-white">
          <PartDrawing />
          <div className="absolute left-[417px] top-[2px] flex items-center h-[27px]">
            {HUD.map((h, i) => (
              <div key={i} className="flex items-center h-full">
                <div className={`w-[26.250px] h-[27px] flex items-center justify-center ${h.on ? 'bg-[#a8a8a8] border border-[#666]' : ''}`}>{h.el}</div>
                {h.caret && <div className="w-[13px] flex justify-center"><Caret color="#999" /></div>}
              </div>
            ))}
          </div>
          {/* window buttons */}
          <div className="absolute right-[9px] top-[-19px] h-[26px] flex items-center">
            <svg width="120" height="16" viewBox="0 0 120 16" fill="none" stroke="#aaa">
              <rect x="1" y="1" width="11" height="13" /><path d="M9 4L5 7.500 9 11z" fill="#aaa" />
              <rect x="27" y="1" width="11" height="13" /><path d="M30 4l4 3.500-4 3.500z" fill="#aaa" />
              <path d="M53 13h10" strokeWidth="1.600" />
              <rect x="79" y="5" width="9" height="9" /><path d="M83 5V1h10v9h-5" />
              <path d="M105 2l10 10M115 2l-10 10" />
            </svg>
          </div>
          {/* task pane tabs */}
          <div className="absolute right-0 top-[30px] w-[26px] flex flex-col border-l border-[#999]">
            {[<Home key="h" s={20} />, <Books key="b" />, <FolderOpen key="f" />, <Layout key="l" />, <Ball key="c" s={19} />, <ListIco key="t" s={20} />, <Custom key="m" />].map((ic, i) => (
              <div key={i} className={`h-[25px] flex items-center justify-center border-t border-b border-[#aaa] -mb-px ${i === 0 ? 'bg-white' : 'bg-[#d2d2d2]'}`}>{ic}</div>
            ))}
          </div>
          <div className="absolute left-0 top-[425px] w-[9px] h-[37px] bg-white border border-l-0 border-[#aaa] flex items-center justify-center">
            <span className="w-[4px] h-[4px] rounded-full bg-[#aaa]" />
          </div>
        </div>
      </div>

      {/* bottom tabs */}
      <div className="h-[15px] shrink-0 flex border-t border-[#8a8a8a] bg-[#f4f4f4] text-[12px]">
        <div className="w-[68px] pl-[2px] flex">
          {[0, 1, 2, 3].map(n => (
            <div key={n} className="w-[16px] bg-[#b8b8b8] border-r border-[#999] flex items-center justify-center">
              <Caret color="#9a9a9a" />
            </div>
          ))}
        </div>
        <div className="w-[59px] bg-white font-bold text-[12.5px] flex items-center justify-center border-r border-[#999]">Modell</div>
        <div className="w-[91px] bg-[#d4d4d4] flex items-center justify-center border-r border-[#999]">3D-Ansichten</div>
        <div className="w-[132px] bg-[#d4d4d4] flex items-center justify-center border-r border-[#999]">Bewegungsstudie 1</div>
      </div>

      {/* status bar */}
      <div className="h-[19px] shrink-0 flex items-center border-t border-[#999] bg-[#f6f6f6] text-[11.6px] pl-[2px]">
        <span className="w-[1555px] whitespace-nowrap">Setzen Sie die Eigenschaften der ausgewählten Bemaßung(en) fest.</span>
        <span className="w-[226px] whitespace-nowrap">Bearbeiten Teil</span>
        <span className="w-[85px]">MMGS</span>
        <span className="w-[30px] flex"><Caret up color="#444" /></span>
        <svg width="17" height="15" viewBox="0 0 24 24" fill="none"><path d="M2 9l12-7 8 8v4L10 22 2 14z" fill="#eee" stroke="#555" /><path d="M2 9l8 8v5M10 17l12-7" stroke="#555" /></svg>
      </div>
      <div className="h-[2px] shrink-0 bg-[#222]" />

      <Overlays />
    </div>
  )
}

// ---- small panel icons
function SchemaIco2() {
  return <I s={20} className="shrink-0"><circle cx="12" cy="13" r="7.500" stroke="#222" strokeWidth="2.200" /><path d="M12 3v20M2 13h20" stroke="#222" strokeWidth="2.200" /><Bolt x={11} y={0} /></I>
}
function Sq() {
  return <I s={20}><rect x="3" y="3" width="8" height="6" stroke="#666" /><rect x="13" y="3" width="8" height="6" stroke="#666" /><path d="M3 12h18v9H3z" stroke="#666" /><path d="M9 16h6" stroke="#666" /></I>
}
function LeaderBox() {
  return <I s={20}><rect x="2" y="7" width="12" height="8" fill="#fff" stroke="#333" /><path d="M14 9l8 7" stroke="#333" strokeWidth="1.800" /></I>
}
function FormGreen() {
  return <I s={22}><rect x="2" y="2" width="20" height="11" fill="#fff" stroke="#333" /><path d="M14 2v11" stroke="#333" /><path d="M5 9l2-3h3l2 3" stroke="#333" /><path d="M8 13h8l6 5-4 5h-7z" fill="#3f9a2c" stroke="#1f6a12" /></I>
}
function Collapse() {
  return <I s={20}><path d="M3 3l18 18M7 2l15 15M2 7l15 15" stroke="#111" strokeWidth="1.800" /><path d="M22 9h-7V2M9 22v-7H2" stroke={TEAL} strokeWidth="2" /></I>
}
function CollapseBolt() {
  return <I s={21}><path d="M3 3l18 18M7 2l15 15M2 7l15 15" stroke="#111" strokeWidth="1.800" /><path d="M9 22v-7H2" stroke={TEAL} strokeWidth="2" /><path d="M22 12l-5 5" stroke={TEAL} strokeWidth="2" /><Bolt x={6} y={1} /></I>
}
function Circ({ kind }) {
  if (kind === 's') {
    return <I s={20}><circle cx="12" cy="15" r="6.500" stroke="#222" strokeWidth="2" /><path d="M3 3v15M21 3v15" stroke={TEAL} strokeWidth="2" /><path d="M4 6h16" stroke="#222" strokeWidth="1.600" /></I>
  }
  return (
    <I s={20}>
      <circle cx="12" cy="12" r="9" stroke={kind === 'd' ? TEAL : '#222'} strokeWidth="2" fill="#fff" />
      {kind === 'r'
        ? <path d="M12 12l5-5M14 6h4v4" stroke={TEAL} strokeWidth="1.800" />
        : <path d="M7 17L17 7M12 6h6v6M6 12v6h6" stroke="#222" strokeWidth="1.800" />}
    </I>
  )
}
function Par() {
  return <I s={20}><circle cx="8" cy="12" r="6" stroke="#222" strokeWidth="2" /><path d="M14 3h8M14 21h8" stroke={TEAL} strokeWidth="2" /><path d="M18 5v14M16 7l2-3 2 3M16 17l2 3 2-3" stroke="#222" strokeWidth="1.400" /></I>
}
function Par2() {
  return <I s={20}><rect x="2" y="6" width="10" height="12" rx="3" stroke="#222" strokeWidth="2" /><path d="M14 3h8M14 21h8" stroke={TEAL} strokeWidth="2" /><path d="M18 5v14M16 7l2-3 2 3M16 17l2 3 2-3" stroke="#222" strokeWidth="1.400" /></I>
}
function Books() {
  return <I s={20}><path d="M4 7l3-2v16H4zM8 5l3-2v18H8zM12 3l3-2v20h-3zM16 2l4 1v17l-4 2z" fill="#fff" stroke="#555" /></I>
}
function FolderOpen() {
  return <I s={22}><path d="M2 4h8l2 3h9v4H7L3 21H2z" fill="#eee" stroke="#444" /><path d="M7 10h16l-5 11H3z" fill="#f6f6f6" stroke="#444" /></I>
}
function Layout() {
  return <I s={20}><rect x="2" y="3" width="20" height="18" fill="#fff" stroke="#333" /><path d="M5 6h8v4H9v4h5v3H5v-3h3v-4H5z" fill="#f2c21a" stroke="#8a6a14" strokeWidth=".6" /><rect x="15" y="6" width="5" height="3" fill="#f2c21a" /><rect x="17" y="12" width="4" height="8" fill="#999" /></I>
}
function Custom() {
  return <I s={21}><rect x="2" y="2" width="16" height="12" fill="#fff" stroke="#333" /><rect x="2" y="2" width="16" height="3" fill="#3f9bc7" /><path d="M4 8h8M4 11h8M2 17h10M2 20h6" stroke="#333" /><path d="M12 14l5-3 6 3v6l-5 3-6-3z" fill="#f2c84b" stroke="#8a6a14" /><circle cx="19" cy="12" r="3" fill="#3f9bc7" /></I>
}
